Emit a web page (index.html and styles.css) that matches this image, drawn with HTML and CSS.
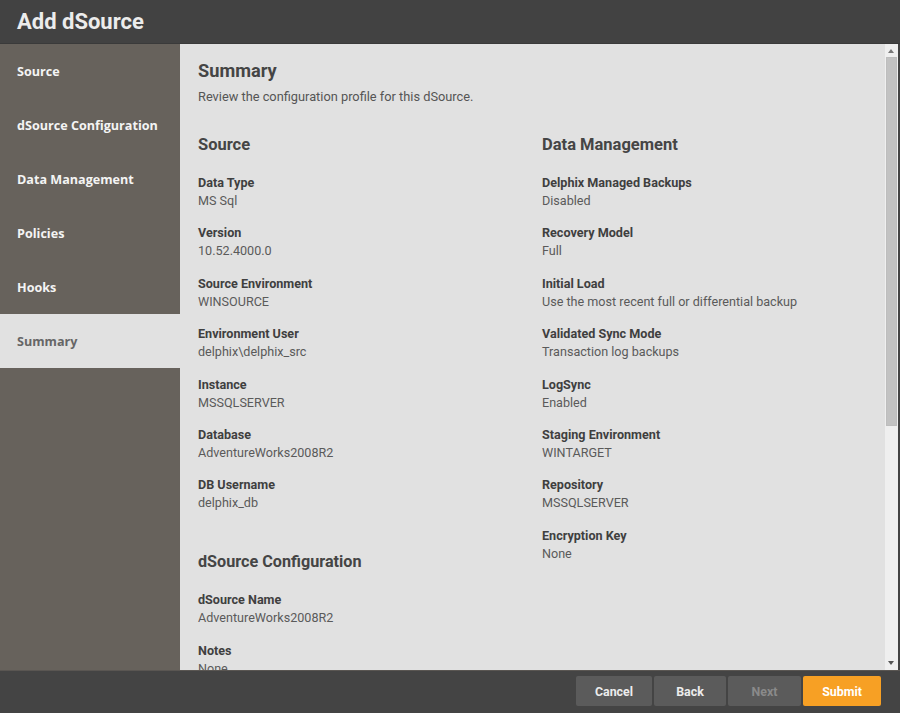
FILE: index.html
```html
<!DOCTYPE html>
<html>
<head>
<meta charset="utf-8">
<link rel="stylesheet" href="styles.css">
</head>
<body>
<div class="dialog">
  <div class="header">Add dSource</div>
  <div class="main">
    <nav class="sidebar">
      <div class="nav-item">Source</div>
      <div class="nav-item">dSource Configuration</div>
      <div class="nav-item">Data Management</div>
      <div class="nav-item">Policies</div>
      <div class="nav-item">Hooks</div>
      <div class="nav-item active">Summary</div>
    </nav>
    <div class="content">
      <h1 class="title">Summary</h1>
      <p class="desc">Review the configuration profile for this dSource.</p>
      <div class="columns">
        <div class="col">
          <h2 class="section">Source</h2>
          <div class="field"><div class="label">Data Type</div><div class="value">MS Sql</div></div>
          <div class="field"><div class="label">Version</div><div class="value">10.52.4000.0</div></div>
          <div class="field"><div class="label">Source Environment</div><div class="value">WINSOURCE</div></div>
          <div class="field"><div class="label">Environment User</div><div class="value">delphix\delphix_src</div></div>
          <div class="field"><div class="label">Instance</div><div class="value">MSSQLSERVER</div></div>
          <div class="field"><div class="label">Database</div><div class="value">AdventureWorks2008R2</div></div>
          <div class="field"><div class="label">DB Username</div><div class="value">delphix_db</div></div>
          <h2 class="section section-gap">dSource Configuration</h2>
          <div class="field"><div class="label">dSource Name</div><div class="value">AdventureWorks2008R2</div></div>
          <div class="field"><div class="label">Notes</div><div class="value">None</div></div>
        </div>
        <div class="col">
          <h2 class="section">Data Management</h2>
          <div class="field"><div class="label">Delphix Managed Backups</div><div class="value">Disabled</div></div>
          <div class="field"><div class="label">Recovery Model</div><div class="value">Full</div></div>
          <div class="field"><div class="label">Initial Load</div><div class="value">Use the most recent full or differential backup</div></div>
          <div class="field"><div class="label">Validated Sync Mode</div><div class="value">Transaction log backups</div></div>
          <div class="field"><div class="label">LogSync</div><div class="value">Enabled</div></div>
          <div class="field"><div class="label">Staging Environment</div><div class="value">WINTARGET</div></div>
          <div class="field"><div class="label">Repository</div><div class="value">MSSQLSERVER</div></div>
          <div class="field"><div class="label">Encryption Key</div><div class="value">None</div></div>
        </div>
      </div>
    </div>
    <div class="scrollbar">
      <div class="arrow up"></div>
      <div class="track"><div class="thumb"></div></div>
      <div class="arrow down"></div>
    </div>
  </div>
  <div class="footer">
    <button class="btn">Cancel</button>
    <button class="btn">Back</button>
    <button class="btn disabled">Next</button>
    <button class="btn primary">Submit</button>
  </div>
</div>
</body>
</html>
```
FILE: styles.css
```css
* { box-sizing: border-box; }
html, body { margin: 0; padding: 0; }
body {
  width: 900px;
  height: 713px;
  overflow: hidden;
  background: #434343;
  font-family: Roboto, "Liberation Sans", sans-serif;
}
.dialog {
  width: 900px;
  height: 713px;
  display: flex;
  flex-direction: column;
}
.header {
  height: 44px;
  flex: none;
  background: #424242;
  color: #ececec;
  font-size: 22px;
  font-weight: 700;
  padding: 1px 0 0 17px;
  line-height: 42px;
  border-bottom: 1px solid #3a3a3a;
}
.main {
  flex: 1;
  display: flex;
  min-height: 0;
  border-right: 2px solid #444;
}
.sidebar {
  width: 180px;
  flex: none;
  background: #67625c;
}
.nav-item {
  height: 54px;
  line-height: 54px;
  padding: 1px 0 0 17px;
  font-family: "Open Sans", sans-serif;
  font-weight: 700;
  font-size: 12.6px;
  color: #f4f4f4;
}
.nav-item.active {
  background: #e1e1e1;
  color: #666;
}
.content {
  flex: 1;
  background: #e1e1e1;
  overflow: hidden;
  padding: 16px 0 0 18px;
  color: #444;
}
.title {
  margin: 0;
  font-size: 18.2px;
  line-height: 22px;
  font-weight: 700;
  color: #454545;
}
.desc {
  margin: 7px 0 0;
  font-size: 12.8px;
  line-height: 16px;
  color: #555;
}
.columns {
  display: grid;
  grid-template-columns: 344px 330px;
  margin-top: 30px;
}
.section {
  margin: 0 0 19px;
  font-size: 16.5px;
  line-height: 20px;
  font-weight: 700;
  color: #454545;
}
.section-gap { margin-top: 40px; font-size: 16.2px; }
.field { margin-bottom: 14.4px; }
.label {
  font-size: 12.6px;
  line-height: 18px;
  font-weight: 700;
  color: #3f3f3f;
}
.value {
  font-size: 12.6px;
  line-height: 18px;
  color: #5a5a5a;
}
.scrollbar {
  width: 13px;
  flex: none;
  background: #efefef;
  display: flex;
  flex-direction: column;
  align-items: center;
}
.arrow {
  height: 13px;
  width: 13px;
  flex: none;
  position: relative;
}
.arrow::after {
  content: "";
  position: absolute;
  left: 3px;
  border-left: 3.5px solid transparent;
  border-right: 3.5px solid transparent;
}
.arrow.up::after { top: 5px; border-bottom: 4px solid #777; }
.arrow.down::after { top: 4px; border-top: 4px solid #555; }
.track {
  flex: 1;
  width: 100%;
  padding: 0 1px;
}
.thumb {
  height: 369px;
  background: #c2c2c2;
  border: 1px solid #bdbdbd;
}
.footer {
  height: 43px;
  flex: none;
  background: #444;
  display: flex;
  justify-content: flex-end;
  align-items: flex-start;
  gap: 2px;
  padding: 5px 19px 0 0;
  border-top: 1px solid #5a5652;
}
.btn {
  height: 30px;
  border: none;
  border-radius: 2px;
  background: #5b5b5b;
  color: #ececec;
  font-family: Roboto, "Liberation Sans", sans-serif;
  font-weight: 700;
  font-size: 12.4px;
  padding: 0;
  width: 74px;
}
.btn:nth-child(1) { width: 76px; }
.btn:nth-child(2) { width: 72px; }
.btn:nth-child(3) { width: 73px; }
.btn.disabled { color: #8a8a8a; }
.btn.primary { background: #f7a024; color: #fff; width: 78px; }
```
